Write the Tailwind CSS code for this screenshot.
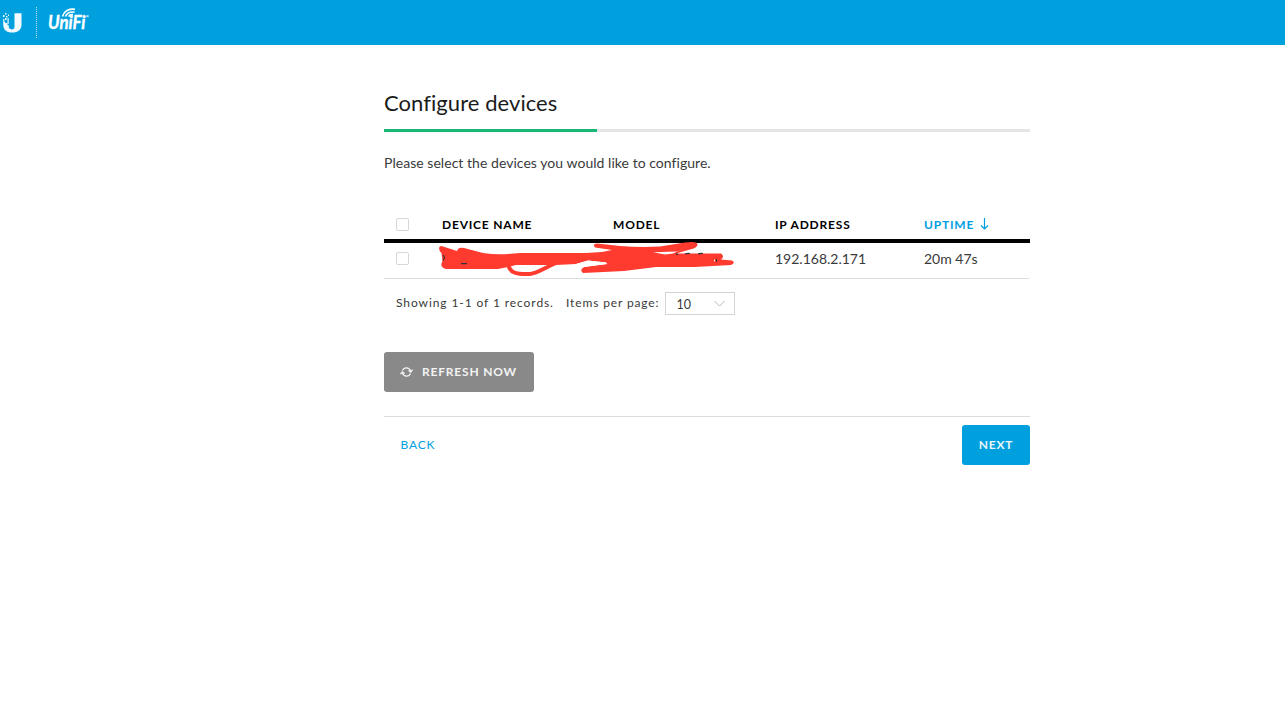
<!DOCTYPE html>
<html lang="en">
<head>
<meta charset="utf-8">
<title>UniFi</title>
<script src="https://cdn.jsdelivr.net/npm/@tailwindcss/browser@4"></script>
</head>
<body class="bg-white font-['Lato',sans-serif] text-[#3a3a3a]">
<header class="flex h-[45px] bg-[#00a0df] text-white">
  <svg class="h-[45px] w-9 shrink-0" viewBox="0 0 36 45" fill="currentColor">
    <path d="M14.500 13.200h7v11.200c0 5.400-3.800 8.100-9.200 8.100-5.600 0-9.100-2.800-9.100-8.100v-2.400h2v1h2.300v2.200h1.300v2.600c.8 1.300 2 1.700 3 1.700 1.200 0 2.700-.7 2.700-2.500z" opacity=".95"/>
    <path d="M5 13h1.500v1.500H5zM3 15h1.500v2H3zM6 16h1.500v1.500H6zM8 14.500h1v1.500H8zM5 18h1.500v2H5zM7.500 18h1.200v6H7.500zM3.200 19h1.200v3H3.200z" opacity=".9"/>
  </svg>
  <div class="mt-[7px] h-[31px] border-l border-dotted border-white/70"></div>
  <svg class="ml-[11px] h-[45px] w-11 shrink-0" viewBox="48 0 44 45" fill="currentColor">
    <text x="48" y="29" font-family="Lato" font-size="18.500" font-weight="700" font-style="italic" textLength="37.500" lengthAdjust="spacingAndGlyphs" stroke="currentColor" stroke-width=".4">UniFi</text>
    <g fill="none" stroke="currentColor" stroke-width="1.700">
      <path d="M62.500 16.500C64 11 69 8.500 75 9.300"/>
      <path d="M65.500 16.500c1.200-3.300 4.500-4.900 9-4.400"/>
      <path d="M68.500 16.500c1-1.500 2.500-2 4.500-1.800"/>
    </g>
    <path d="M86.300 15.200h2.400v2h-2.400z" opacity=".7"/>
  </svg>
</header>
<main class="ml-[384px] w-[646px]">
  <h1 class="pt-[42px] text-[22px] leading-[32px] tracking-[0.06px] text-[#1b1b1b]">Configure devices</h1>
  <div class="mt-[10px] h-[3px] bg-[#e5e5e5]"><div class="h-full w-[213px] bg-[#18b775]"></div></div>
  <p class="mt-[21px] text-[14px] leading-5 tracking-[0.04px]">Please select the devices you would like to configure.</p>
  <div class="relative mt-[37px]">
    <div class="grid h-[33px] grid-cols-[58px_171px_162px_149px_1fr] items-center border-b-4 border-black text-[12px] font-bold tracking-[0.8px] text-black">
      <span class="ml-3 size-[13px] rounded-[2px] border border-[#d5d7da]"></span>
      <span>DEVICE NAME</span><span>MODEL</span><span>IP ADDRESS</span>
      <span class="flex items-center gap-[6px] text-[#00a0df]">UPTIME
        <svg class="mb-[2px] h-[14px] w-[9px]" viewBox="0 0 9 14" fill="none" stroke="currentColor" stroke-width="1.200"><path d="M4.500 1v11M1 8.500l3.500 3.500L8 8.500"/></svg>
      </span>
    </div>
    <div class="mr-px grid h-9 grid-cols-[58px_171px_162px_149px_1fr] items-center border-b border-[#dcdcdc] pb-[5px] text-[14px]">
      <span class="ml-3 size-[13px] rounded-[2px] border border-[#d5d7da]"></span>
      <span></span><span></span><span>192.168.2.171</span><span>20m 47s</span>
    </div>
    <svg class="absolute left-14 top-[27px] h-[44px] w-[300px] overflow-visible" viewBox="440 237 300 44" fill="none" stroke-linecap="round" stroke-linejoin="round">
      <path fill="#ff3b30" d="M439 248Q440 245 443 246.500L457 251 458 249Q460 247 464 248L483 253Q496 255 508 254L520 253H586L602 252 612 250 595 247.500Q592 244 597 243.500L620 246Q640 247.500 660 246.500L685 242.500Q698 240.500 697.500 245 696.500 248 690 249.500L676 253.500H721Q725 256.500 721 259.500L732 260.500Q736 263 731 265L695 267H656L624 271 583 273Q579 270 584 267L607 264 606 262.500 588 260.500 576 264 556 265H516L508 267 498 269H446Q439 267 442.500 261L441.500 253Q439 251 439 248Z"/>
      <path stroke="#ff3b30" stroke-width="4" d="M509 267c2 6 8 7.500 21 7 8-1 14-6 26-11"/>
      <path fill="#fff" d="M653 252.300l24-.8 6-2.500-10 4.500-8 1z"/>
      <path fill="#fff" d="M576 264l12-3.500 18 2 1 1.500-23 3-8 3z"/>
      <path stroke="#333" stroke-width="1.200" stroke-linecap="butt" d="M443 255l1.500 2.500-1.500 3M461 263.700h6M676 253.600l2 1M685 254q2-1 5-.5M698 254q2-1 5-.5M716.500 259v3"/>
      <path stroke="#fff" d="M714.500 260v1"/>
    </svg>
  </div>
  <div class="mt-[13px] flex h-[23px] items-center pl-3 text-[12px]">
    <span class="-mt-[2px] w-[158px] whitespace-nowrap tracking-[0.91px]">Showing 1-1 of 1 records.</span>
    <span class="-mt-[2px] ml-3 w-[94px] whitespace-nowrap tracking-[0.87px]">Items per page:</span>
    <div class="ml-[5px] flex h-[23px] w-[70px] items-center justify-between border border-[#d4d4d4] pl-[10.500px] pr-[9px] text-[12.500px] tracking-normal">
      <span class="pt-[4px]">10</span>
      <svg class="h-[7px] w-[11px]" viewBox="0 0 11 7" fill="none" stroke="#b9b9b9"><path d="M.5 1l5 5 5-5"/></svg>
    </div>
  </div>
  <button class="mt-[37px] flex h-10 w-[150px] items-center rounded-[3px] bg-[#898989] pl-4 text-[12px] font-bold tracking-[0.8px] text-[#f3f3f3]">
    <svg class="mr-[9px] h-[12px] w-[13px]" viewBox="0 0 13 12" fill="none" stroke="currentColor" stroke-width="1.200"><path d="M2.500 4.500C4 1 9 .8 10.700 5M10.500 7.500C9 11 4 11.200 2.300 7M8.500 4.500l2.300 1.700 1.700-2.600M.5 8.200l1.700-2.400 2.500 1.600"/></svg>REFRESH NOW
  </button>
  <div class="mt-6 flex items-center justify-between border-t border-[#dcdcdc] pt-2">
    <a class="ml-[16.500px] text-[12px] tracking-[0.8px] text-[#00a0df]">BACK</a>
    <button class="h-10 w-[68px] rounded-[3px] bg-[#00a0df] text-[12px] font-bold tracking-[0.8px] text-[#e8f6fc]">NEXT</button>
  </div>
</main>
</body>
</html>
